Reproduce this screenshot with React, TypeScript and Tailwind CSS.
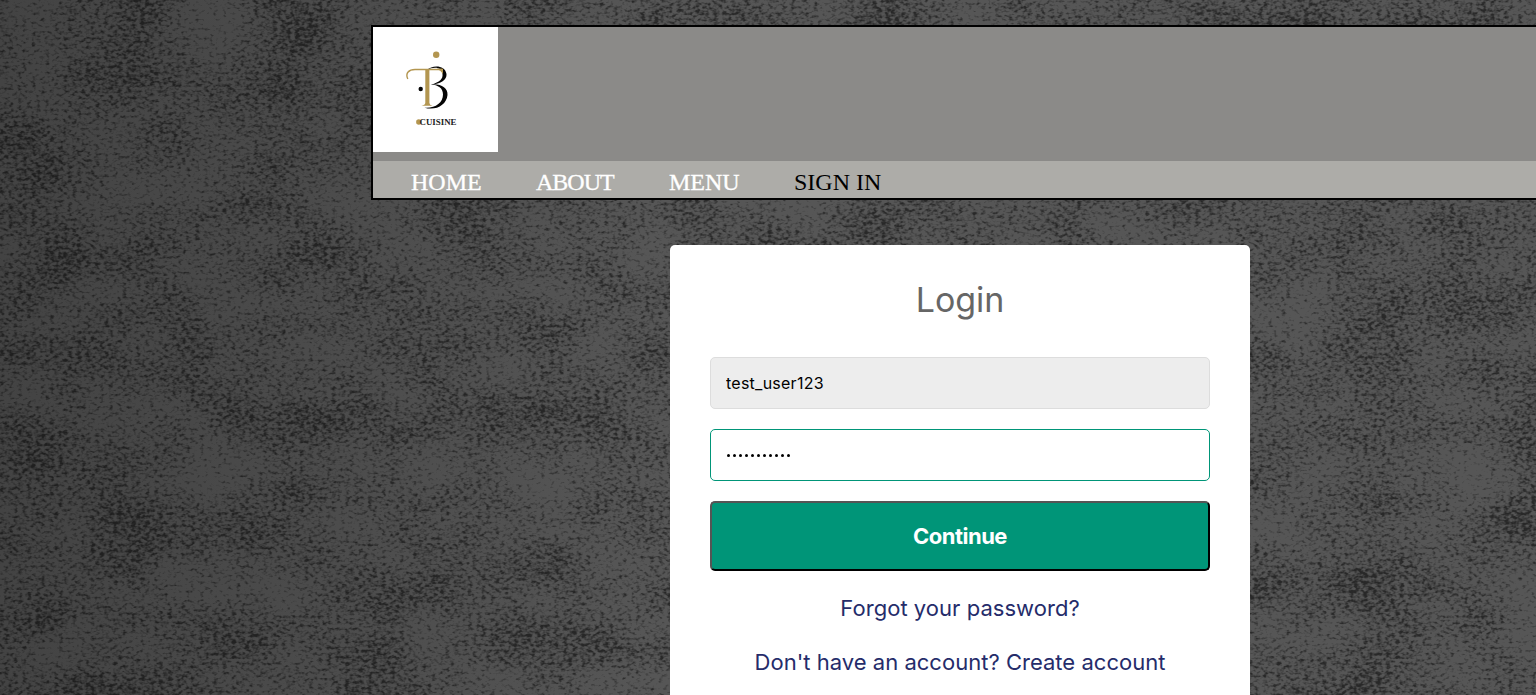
import React from "react";

function ConcreteBackground() {
  return (
    <svg className="absolute inset-0 h-full w-full" aria-hidden="true">
      <defs>
        <linearGradient id="shade" x1="0" x2="1" y1="0" y2="0">
          <stop offset="0" stopColor="#434343" />
          <stop offset="0.2" stopColor="#4b4b4b" />
          <stop offset="0.42" stopColor="#565656" />
          <stop offset="1" stopColor="#565656" />
        </linearGradient>
        <filter id="grain" x="0" y="0" width="100%" height="100%" colorInterpolationFilters="sRGB">
          <feTurbulence type="fractalNoise" baseFrequency="0.22 0.32" numOctaves="2" seed="8" result="fine" />
          <feColorMatrix in="fine" type="matrix" values="0 0 0 0 0  0 0 0 0 0  0 0 0 0 0  1 0 0 0 0" result="fineA" />
          <feTurbulence type="fractalNoise" baseFrequency="0.012 0.018" numOctaves="6" seed="34" result="coarse" />
          <feColorMatrix in="coarse" type="matrix" values="0 0 0 0 0  0 0 0 0 0  0 0 0 0 0  1 0 0 0 0" result="coarseA" />
          <feComposite in="fineA" in2="coarseA" operator="arithmetic" k1="0" k2="2.5" k3="1.1" k4="-1.62" />
          <feComponentTransfer>
            <feFuncA type="table" tableValues="0 0.09 0.19 0.32 0.46 0.54" />
          </feComponentTransfer>
        </filter>
      </defs>
      <rect width="100%" height="100%" fill="url(#shade)" />
      <rect width="100%" height="100%" filter="url(#grain)" />
    </svg>
  );
}

function Logo() {
  return (
    <svg className="block h-[125px] w-[125px] bg-white" viewBox="0 0 125 125" role="img" aria-label="TB Cuisine">
      <path d="M54 43C59 38 72 37.500 73.500 47C74 53 68 57 58 57.700C67 55 70 52 69.500 47C69 40 61 39 54 43Z" fill="#050505" />
      <path d="M58 57.500C68 56.500 75 61 74.500 68C73.500 78 63 84 51.500 80.700C62 81.500 70 76 70 67.500C70 61 65 58 58 57.500Z" fill="#050505" />
      <path d="M34.800 52C32 46 36 42.500 42 42.500H69.500" fill="none" stroke="#b39650" strokeWidth="1.400" />
      <path d="M64 41.800H70V47L67.500 44Z" fill="#b39650" />
      <path d="M52.300 42H56.400V76Q56.500 78 59.500 78.700H48.500Q52 78 52.300 76Z" fill="#b39650" />
      <circle cx="63.200" cy="27.700" r="3.200" fill="#b39650" />
      <circle cx="47.700" cy="62" r="2.200" fill="#050505" />
      <circle cx="45.800" cy="95" r="2.700" fill="#b39650" />
      <text x="46.500" y="97.500" textLength="37" lengthAdjust="spacingAndGlyphs" className="font-['Liberation_Serif',serif] text-[8.500px] font-bold" fill="#222222">CUISINE</text>
    </svg>
  );
}

export default function App() {
  return (
    <main className="relative flex h-screen min-h-[695px] flex-col overflow-hidden bg-[#4b4b4b] pt-[25px] font-[Inter,sans-serif]">
      <ConcreteBackground />
      <header className="relative ml-[371px] flex h-[175px] w-[1400px] shrink-0 flex-col justify-between border-2 border-black bg-[#8b8a88]">
        <Logo />
        <nav className="flex h-[37px] items-center bg-[#adaca8] pt-[5px] pl-[38px] font-['Liberation_Serif',serif] text-2xl leading-8 whitespace-nowrap text-white">
          <a className="w-[125px] [-webkit-text-stroke:0.3px_white]">HOME</a>
          <a className="w-[133px] tracking-[-1px] [-webkit-text-stroke:0.3px_white]">ABOUT</a>
          <a className="w-[125px] [-webkit-text-stroke:0.3px_white]">MENU</a>
          <a className="text-black">SIGN IN</a>
        </nav>
      </header>
      <section className="relative mt-[45px] ml-[670px] flex h-[600px] w-[580px] shrink-0 flex-col rounded-[5px] bg-white px-10 pt-8">
        <h1 className="h-20 text-center text-[34px] leading-[46px] tracking-[-0.1px] text-[#666]">Login</h1>
        <input
          className="h-[52px] rounded-[5px] border border-[#ddd] bg-[#ededed] px-[15px] text-[16px] tracking-[0.25px] text-black outline-none"
          defaultValue="test_user123"
        />
        <div className="mt-5 flex h-[52px] items-center gap-[3px] rounded-[5px] border border-[#009578] bg-white px-4">
          {Array.from({ length: 11 }, (_, i) => (
            <span key={i} className="h-[3px] w-[3px] rounded-full bg-black" />
          ))}
        </div>
        <button className="mt-5 h-[70px] rounded-[5px] border-2 border-t-[#555] border-r-black border-b-black border-l-[#555] bg-[#009578] text-[22px] font-bold tracking-[-0.5px] text-white">
          Continue
        </button>
        <a className="mt-5 text-center text-[22px] leading-[34px] tracking-[0.04px] text-[#252c6a]">Forgot your password?</a>
        <a className="mt-5 text-center text-[22px] leading-[34px] tracking-[0.02px] whitespace-nowrap text-[#252c6a]">
          Don't have an account? Create account
        </a>
      </section>
    </main>
  );
}
